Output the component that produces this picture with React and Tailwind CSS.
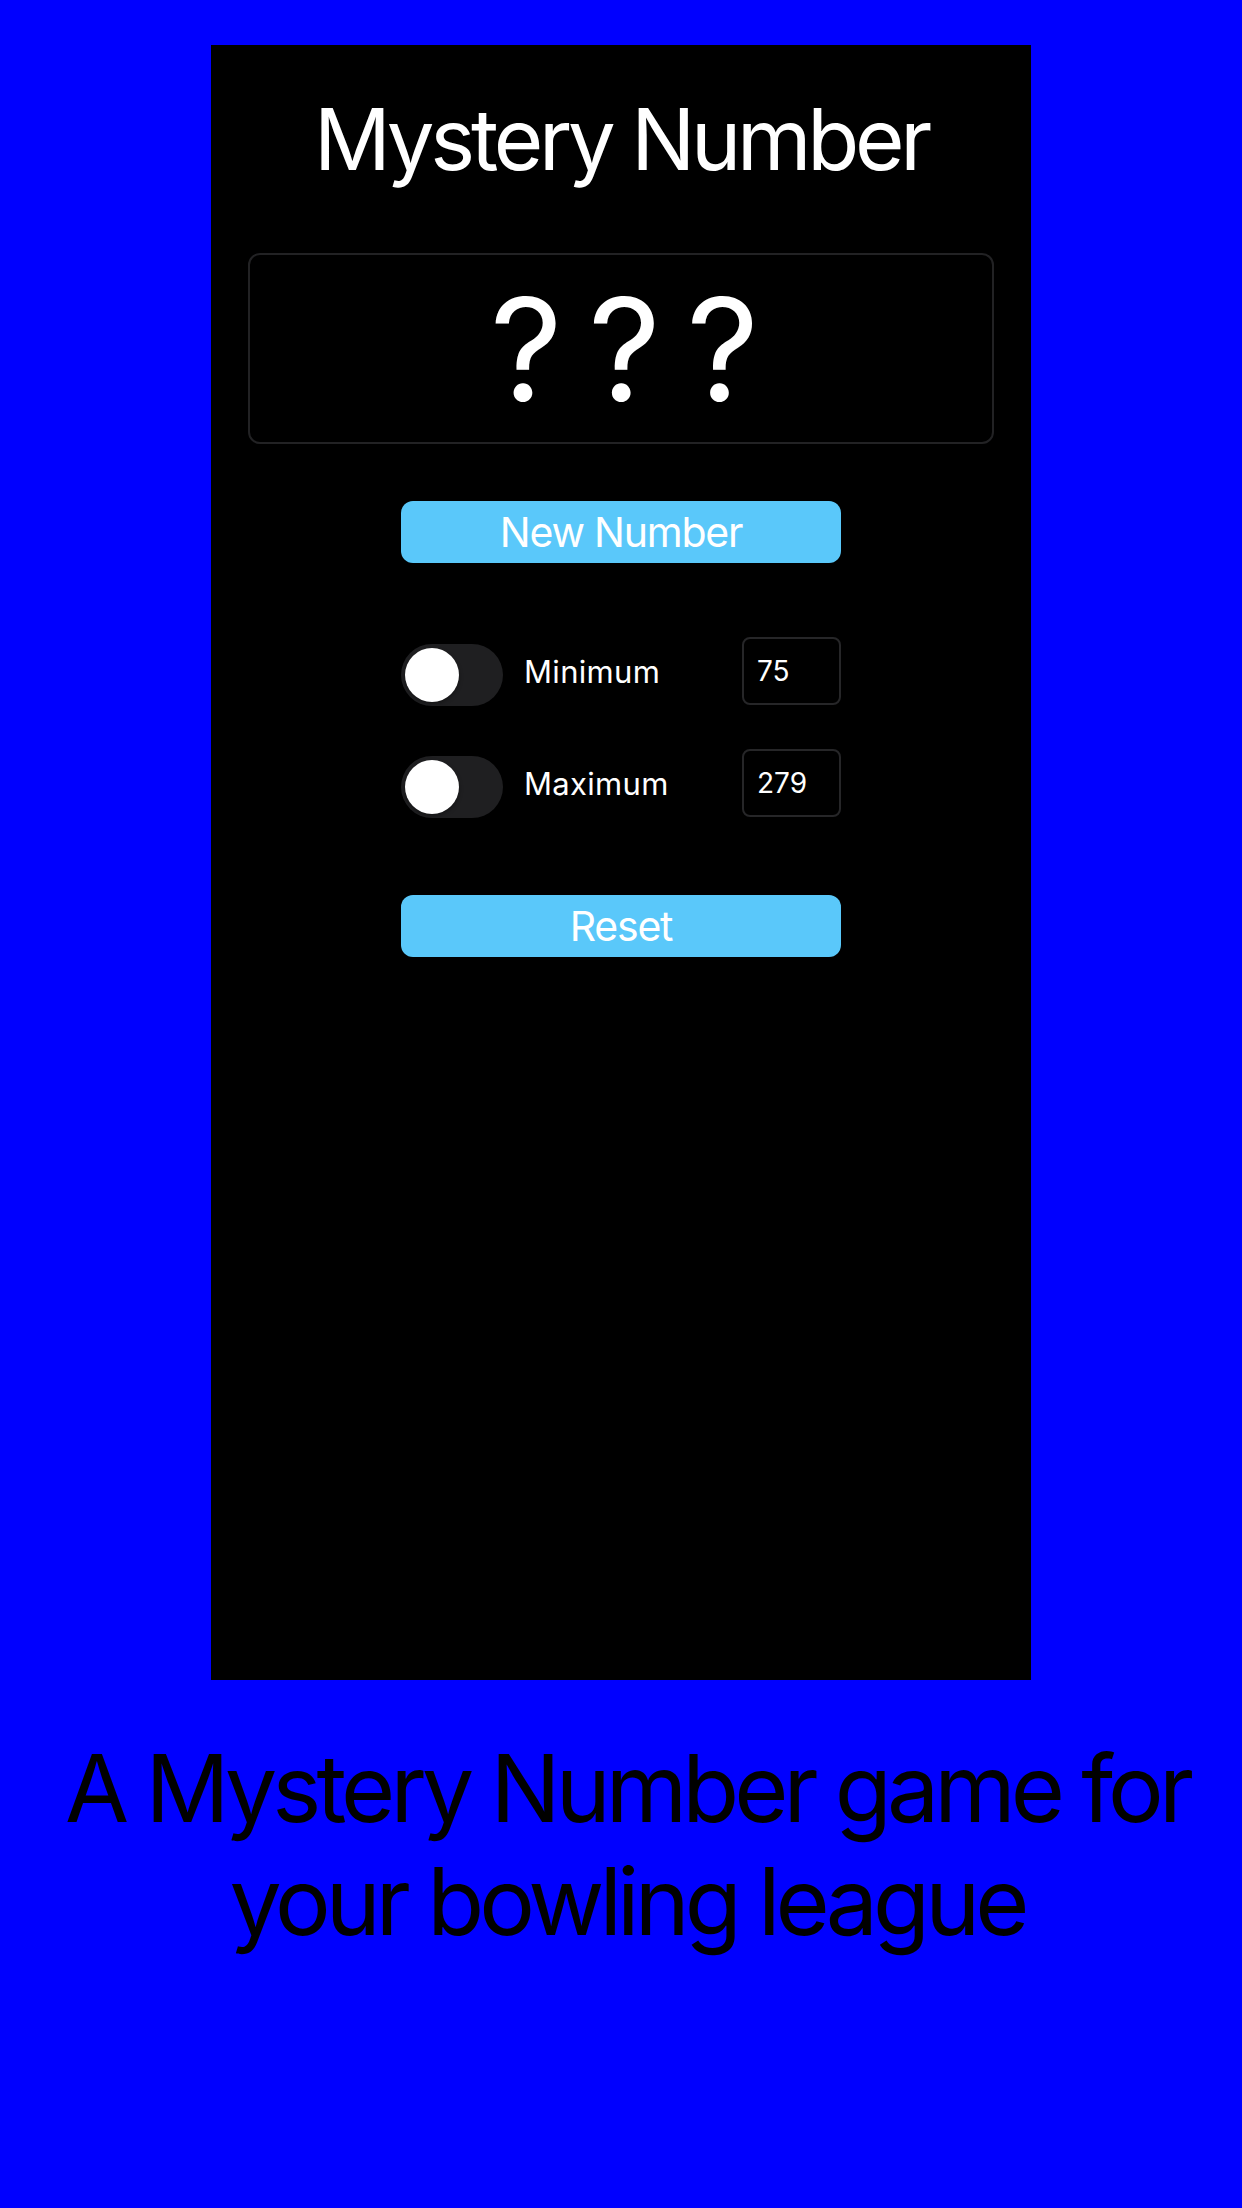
const Toggle = () => (
  <div className="mt-[7px] flex h-[62px] w-[102px] shrink-0 items-center rounded-full bg-[#1f1f21] px-[4px]">
    <div className="h-[54px] w-[54px] rounded-full bg-white shadow-[0_2px_4px_rgba(0,0,0,0.35)]" />
  </div>
);

const LimitRow = ({ label, value }) => (
  <div className="flex h-[68px] w-[440px] items-center">
    <Toggle />
    <span className="ml-[21px] flex-1 text-[31px] leading-none tracking-[0.01em] text-white">{label}</span>
    <div className="flex h-[68px] w-[99px] items-center rounded-[8px] border-2 border-[#262628] pl-[13px] text-[28px] leading-none text-white">
      {value}
    </div>
  </div>
);

const App = () => {
  return (
    <div className="min-h-[2208px] w-full bg-[#0000ff] pt-[45px] font-['Inter',sans-serif]">
      <div className="mx-auto flex h-[1635px] w-[820px] flex-col items-center bg-black">
        <h1 className="mt-[52px] text-[85px] leading-none tracking-[-0.05em] text-white">Mystery Number</h1>

        <div className="mt-[71px] flex h-[191px] w-[746px] items-center justify-center rounded-[12px] border-2 border-[#222224]">
          <span className="text-[142px] leading-none tracking-[-0.05em] text-white">? ? ?</span>
        </div>

        <button className="mt-[57px] h-[62px] w-[440px] rounded-[12px] bg-[#5ac8fa] text-[41px] leading-none tracking-[-0.03em] text-white">
          New Number
        </button>

        <div className="mt-[74px]">
          <LimitRow label="Minimum" value="75" />
        </div>
        <div className="mt-[44px]">
          <LimitRow label="Maximum" value="279" />
        </div>

        <button className="mt-[78px] h-[62px] w-[440px] rounded-[12px] bg-[#5ac8fa] text-[41px] leading-none tracking-[-0.03em] text-white">
          Reset
        </button>
      </div>

      <p className="mt-[52px] whitespace-nowrap pl-[12px] text-center text-[93px] leading-[113px] tracking-[-0.053em] text-black">
        A Mystery Number game for
        <br />
        your bowling league
      </p>
    </div>
  );
};

export default App;
